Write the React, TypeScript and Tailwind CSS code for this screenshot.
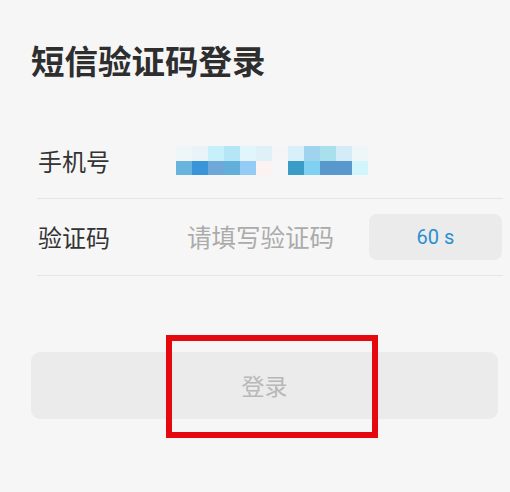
import React from "react";

const top = ["#eef6f8", "#eaf4f8", "#c8f0fa", "#b4e6f6", "#e0f6fc", "#dff0f8", "#f5f5f8", "#d8f0fa", "#a0d4ee", "#a8e0ec", "#d4ecf8", "#eef6f8"];
const bottom = ["#68b4dc", "#3a94d8", "#6ea8d8", "#62b0da", "#94ccf6", "#fcf2f2", "#f6f6f8", "#3c9cc8", "#80d0f2", "#5898cc", "#5898cc", "#d0f6fc"];

function Mosaic() {
  return (
    <div className="flex flex-col -ml-[11px]">
      <div className="flex">
        {top.map((c, i) => (
          <div key={i} className="w-[16px] h-[15px]" style={{ backgroundColor: c }} />
        ))}
      </div>
      <div className="flex">
        {bottom.map((c, i) => (
          <div key={i} className="w-[16px] h-[14px]" style={{ backgroundColor: c }} />
        ))}
      </div>
    </div>
  );
}

export default function App() {
  return (
    <div
      className="relative w-[510px] h-[492px] bg-[#f6f6f6] overflow-hidden"
      style={{ fontFamily: '"Noto Sans CJK SC", "Noto Sans", sans-serif' }}
    >
      <div className="pt-[40px] pl-[31px]">
        <h1 className="text-[33.5px] leading-[40px] font-bold text-[#2e2e2e]">短信验证码登录</h1>
      </div>
      <div className="mt-[43px] ml-[37px] w-[466px]">
        <div className="flex items-center h-[76px] border-b border-[#e5e5e5]">
          <div className="w-[150px] pl-[1px] text-[24px] text-[#333]">手机号</div>
          <Mosaic />
        </div>
        <div className="flex items-center h-[77px] border-b border-[#e5e5e5]">
          <div className="w-[150px] pl-[1px] text-[24px] text-[#333]">验证码</div>
          <div className="flex-1 text-[24.5px] text-[#ababab]">请填写验证码</div>
          <div className="w-[133px] h-[46px] mr-[1px] rounded-[8px] bg-[#ebebeb] flex items-center justify-center text-[20px] text-[#2a8fd2]" style={{ fontFamily: 'Roboto, "Noto Sans", sans-serif' }}>
            60 s
          </div>
        </div>
      </div>
      <div className="mt-[76px] ml-[31px] w-[467px] h-[67px] rounded-[9px] bg-[#ebebeb] flex items-center justify-center text-[23px] text-[#b8b8b8]">
        登录
      </div>
      <div className="absolute left-[166px] top-[335px] w-[212px] h-[103px] border-[6px] border-[#e5080e]" />
    </div>
  );
}
